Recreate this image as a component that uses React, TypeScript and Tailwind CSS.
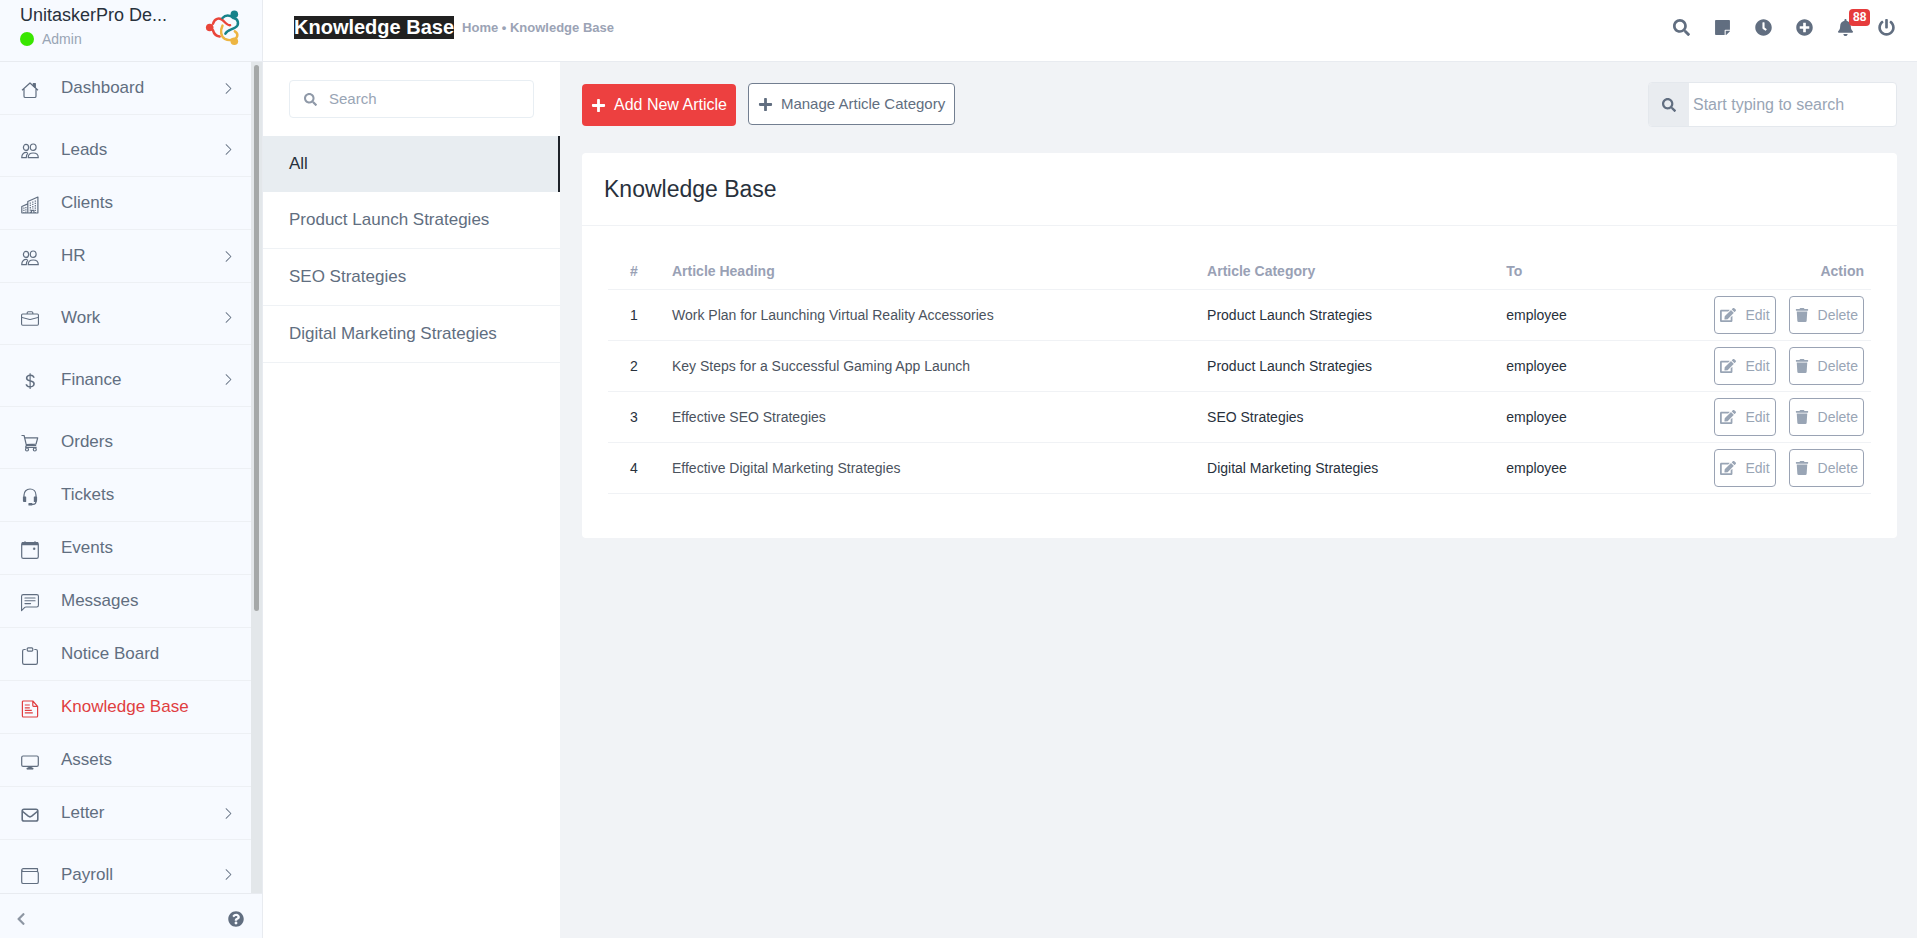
import React, { useState } from "react";
import {
  FaBell,
  FaChevronLeft,
  FaClock,
  FaEdit,
  FaPlus,
  FaPlusCircle,
  FaPowerOff,
  FaQuestionCircle,
  FaSearch,
  FaStickyNote,
  FaTrash,
} from "react-icons/fa";
import { BsBriefcase, BsChatLeftText, BsChevronRight, BsCurrencyDollar } from "react-icons/bs";

type IconProps = { className?: string };

const svgProps = {
  viewBox: "0 0 18 18",
  fill: "none",
  stroke: "currentColor",
  strokeWidth: 1.2,
  strokeLinejoin: "round" as const,
};

const HouseIcon = ({ className }: IconProps) => (
  <svg {...svgProps} className={className}>
    <path d="M1 9.300 9 2l8 7.300M3 8v7.200c0 .8.5 1.300 1.300 1.300h9.400c.8 0 1.300-.5 1.300-1.300V8" />
    <path d="M12.300 2.500h2v4l-2-1.800z" fill="currentColor" />
  </svg>
);

const PeopleIcon = ({ className }: IconProps) => (
  <svg {...svgProps} className={className}>
    <ellipse cx="5" cy="5.4" rx="2.6" ry="3" />
    <ellipse cx="12.2" cy="5.2" rx="2.9" ry="3.200" />
    <path d="M6.500 10.600C3 9.900.7 11.800.7 15.700h4.600c0-2 .5-3.600 1.600-4.600M7.200 15.700c0-3.200 1.800-4.700 5-4.700s5.100 1.500 5.100 4.700z" />
  </svg>
);

const BuildingIcon = ({ className }: IconProps) => (
  <svg {...svgProps} className={className}>
    <path d="M.8 17v-6.500l6-2.600M6.800 17V5.500L16.900 1v16M.5 17h16.800M10.500 17v-2.600h2.400V17" />
    <path strokeDasharray="1.3 1" d="M9.300 6.500V17M11.800 5.500V13M14.300 4.500V17M2.900 11.500V17M4.900 11V17" />
  </svg>
);

const CartIcon = ({ className }: IconProps) => (
  <svg {...svgProps} className={className}>
    <path d="M.5 1.500h2.600l2.300 9.800h9.800M3.700 3.800h13l-1.600 6.200-10 .6M5.400 11.300l-.8 2h11" />
    <circle cx="6" cy="15.500" r="1.500" />
    <circle cx="13.800" cy="15.500" r="1.500" />
  </svg>
);

const HeadsetIcon = ({ className }: IconProps) => (
  <svg {...svgProps} className={className}>
    <path d="M3 10.500V7.300C3 3.500 5.500 1 9 1s6 2.500 6 6.300v6.200c0 1.700-1.200 2.800-3 2.800h-1.500" />
    <path d="M3 9h1.600v4.500H3.500c-.7 0-1-.4-1-1V9zM15 9h-1.600v4.500h1.100c.7 0 1-.4 1-1V9zM8 15.600h2.800V17H8z" fill="currentColor" />
  </svg>
);

const CalendarIcon = ({ className }: IconProps) => (
  <svg {...svgProps} className={className}>
    <rect x=".7" y="1.700" width="16.600" height="15.600" rx="1.600" />
    <path d="M1.500 1.500h15v2.200h-15zM4 .3v1.500M14 .3v1.500" fill="currentColor" />
    <path d="M12.400 6.900h1.600v1.600h-1.600z" fill="currentColor" strokeWidth=".6" />
  </svg>
);

const ClipboardIcon = ({ className }: IconProps) => (
  <svg {...svgProps} className={className}>
    <path d="M4.700 2.500H3.200c-1 0-1.600.6-1.600 1.600v11.600c0 1 .6 1.600 1.600 1.600h11.600c1 0 1.600-.6 1.600-1.600V4.100c0-1-.6-1.600-1.600-1.600h-1.500" />
    <rect x="6.200" y=".9" width="5.600" height="3.200" rx="1" />
  </svg>
);

const ArticleIcon = ({ className }: IconProps) => (
  <svg {...svgProps} className={className}>
    <path d="M11.800 1H2.300c-.6 0-.9.3-.9.900v14.200c0 .6.300.9.900.9h13.400c.6 0 .9-.3.900-.9V6.300zM11.800 1v4.600c0 .5.200.7.700.7h4.100" />
    <path d="M3.800 5h5M3.800 7.800h5M3.800 10.300h7M3.800 12.800h8" />
  </svg>
);

const MonitorIcon = ({ className }: IconProps) => (
  <svg {...svgProps} className={className}>
    <rect x=".7" y="3" width="16.600" height="10.400" rx="1.400" />
    <path d="M7.300 13.600h3.400v1.400h1.400v1.200H5.900V15h1.400z" fill="currentColor" strokeWidth=".6" />
  </svg>
);

const EnvelopeIcon = ({ className }: IconProps) => (
  <svg {...svgProps} strokeWidth={1.600} className={className}>
    <rect x="1.200" y="3.200" width="15.600" height="11.800" rx="1.800" />
    <path d="m1.700 5.500 5.600 4.700c1.200.9 2.200.9 3.400 0L16.300 5.500" />
  </svg>
);

const WalletIcon = ({ className }: IconProps) => (
  <svg {...svgProps} className={className}>
    <path d="M16.500 4.500V1.700H2.400C1.300 1.700.7 2.300.7 3.100s.6 1.400 1.700 1.400h13.300c1 0 1.600.6 1.600 1.600v8.800c0 1-.6 1.600-1.600 1.600H2.300c-1 0-1.600-.6-1.600-1.600V3.100" />
  </svg>
);

const Logo = () => (
  <svg viewBox="0 0 36 38" className="h-9 w-[35px]" fill="none" strokeWidth="2.600" strokeLinecap="round">
    <circle cx="4.500" cy="18.500" r="4" fill="#e9453a" />
    <circle cx="30.500" cy="4.500" r="4" fill="#16828a" />
    <circle cx="30.500" cy="33" r="4" fill="#edb542" />
    <path stroke="#e9453a" d="M8 14.500C9.500 9 14.500 7.500 18.500 11c3 3 5 5.500 7.500 5M8 21.500c1 4 3.500 6 7 6.500" />
    <path stroke="#edb542" d="M18 16.500c-2.500 5-2 11.500 2.500 14 2.500 1.300 6 1.500 8 .5C34 31 35.500 25 31 22.500" />
    <path stroke="#16828a" d="M18 8.500c3-3.500 8-3.500 11.500 0C35 9 36 16 31.500 18.500c-4 2.500-8.500 2-10.500 6.500" />
  </svg>
);

const menu = [
  { label: "Dashboard", icon: HouseIcon, sub: true },
  { label: "Leads", icon: PeopleIcon, sub: true, spaced: true },
  { label: "Clients", icon: BuildingIcon },
  { label: "HR", icon: PeopleIcon, sub: true },
  { label: "Work", icon: BsBriefcase, sub: true, spaced: true },
  { label: "Finance", icon: BsCurrencyDollar, sub: true, spaced: true },
  { label: "Orders", icon: CartIcon, spaced: true },
  { label: "Tickets", icon: HeadsetIcon },
  { label: "Events", icon: CalendarIcon },
  { label: "Messages", icon: BsChatLeftText },
  { label: "Notice Board", icon: ClipboardIcon },
  { label: "Knowledge Base", icon: ArticleIcon, active: true },
  { label: "Assets", icon: MonitorIcon },
  { label: "Letter", icon: EnvelopeIcon, sub: true },
  { label: "Payroll", icon: WalletIcon, sub: true, spaced: true },
];

const categories = ["All", "Product Launch Strategies", "SEO Strategies", "Digital Marketing Strategies"];

const articles = [
  { heading: "Work Plan for Launching Virtual Reality Accessories", category: "Product Launch Strategies", to: "employee" },
  { heading: "Key Steps for a Successful Gaming App Launch", category: "Product Launch Strategies", to: "employee" },
  { heading: "Effective SEO Strategies", category: "SEO Strategies", to: "employee" },
  { heading: "Effective Digital Marketing Strategies", category: "Digital Marketing Strategies", to: "employee" },
];

const Sidebar = () => (
  <aside className="flex w-[263px] shrink-0 flex-col border-r border-[#e8ebf0] bg-[#f7faff]">
    <div className="flex h-[62px] shrink-0 justify-between border-b border-[#e8ebf0] pl-5 pr-[22px]">
      <div className="pt-[5px]">
        <p className="text-[18px] leading-5 text-[#28313c]">UnitaskerPro De...</p>
        <p className="flex items-center gap-2 pt-1 text-sm text-[#99a5b5]">
          <span className="size-[14px] rounded-full bg-[#39e600]" />
          Admin
        </p>
      </div>
      <div className="pt-[10px]">
        <Logo />
      </div>
    </div>

    <div className="flex min-h-0 flex-1">
      <nav className="min-w-0 flex-1 overflow-hidden">
        {menu.map(({ label, icon: Icon, sub, spaced, active }) => (
          <a
            key={label}
            href="#"
            className={`flex items-center border-b border-[#edf0f4] pl-[21px] pr-4 ${
              spaced ? "h-[62px] pt-2" : "h-[53px]"
            } ${active ? "text-[#e03e41]" : "text-[#616e80]"}`}
          >
            <Icon className="mt-[3px] size-[18px]" />
            <span className="flex-1 pl-[22px] text-[17px]">{label}</span>
            {sub && <BsChevronRight className="size-[13px]" />}
          </a>
        ))}
      </nav>
      {/* scroll track */}
      <div className="w-[11px] bg-[#e3e7ea] px-[3px] pt-[3px]">
        <div className="h-[66%] rounded-full bg-[#a5a8a8]" />
      </div>
    </div>

    <div className="flex h-[45px] shrink-0 items-center justify-between border-t border-[#e8ebf0] pl-[14px] pr-[18px] pt-[6px] text-[#616e80]">
      <button type="button" aria-label="Collapse menu" className="text-[#8d96a3]">
        <FaChevronLeft className="size-[14px]" />
      </button>
      <button type="button" aria-label="Help">
        <FaQuestionCircle className="size-4" />
      </button>
    </div>
  </aside>
);

const TopBar = () => (
  <header className="flex h-[62px] shrink-0 items-center justify-between border-b border-[#e8ebf0] bg-white pb-[6px] pl-[31px] pr-[22px]">
    <div className="flex items-center gap-2">
      <h1 className="bg-[#212121] text-xl leading-[23px] font-bold text-white">Knowledge Base</h1>
      <p className="text-[13px] font-bold text-[#9ba3b5]">
        <a href="#">Home</a> • <a href="#">Knowledge Base</a>
      </p>
    </div>
    <div className="flex items-center gap-6 text-[#616e80]">
      <button type="button" aria-label="Search"><FaSearch className="size-[17px]" /></button>
      <button type="button" aria-label="Sticky notes"><FaStickyNote className="size-[17px]" /></button>
      <button type="button" aria-label="Timer"><FaClock className="size-[17px]" /></button>
      <button type="button" aria-label="Add"><FaPlusCircle className="size-[17px]" /></button>
      <button type="button" aria-label="Notifications" className="relative">
        <FaBell className="size-[17px]" />
        <span className="absolute -top-[10px] left-3 rounded bg-[#e63c3c] px-1 text-xs leading-[17px] font-bold text-white">88</span>
      </button>
      <button type="button" aria-label="Log out"><FaPowerOff className="size-[17px]" /></button>
    </div>
  </header>
);

const App = () => {
  const [selected, setSelected] = useState("All");

  return (
    <div className="flex h-screen overflow-hidden bg-[#f1f3f6] font-['Liberation_Sans',Arial,sans-serif] text-[#28313c]">
      <Sidebar />

      <div className="flex min-w-0 flex-1 flex-col">
        <TopBar />

        <div className="flex min-h-0 flex-1">
          <section className="w-[297px] shrink-0 bg-white">
            <div className="px-[26px] pt-[18px] pb-[18px]">
              <label className="flex h-[38px] items-center gap-3 rounded border border-[#e8eef3] px-[14px] text-[#8f99a8]">
                <FaSearch className="size-[13px] shrink-0" />
                <input
                  type="text"
                  aria-label="Search categories"
                  placeholder="Search"
                  className="w-full min-w-0 text-[15px] outline-none placeholder:text-[#99a5b5]"
                />
              </label>
            </div>
            {categories.map((c) => (
              <button
                key={c}
                type="button"
                onClick={() => setSelected(c)}
                className={`flex w-full items-center pl-[26px] text-left text-[17px] ${
                  selected === c
                    ? "h-14 border-r-2 border-[#1d2228] bg-[#e8edf1] text-[#28313c]"
                    : "h-[57px] border-b border-[#eff2f5] text-[#616e80]"
                }`}
              >
                {c}
              </button>
            ))}
          </section>

          <main className="min-w-0 flex-1 pt-5 pr-5 pl-[22px]">
            <div className="flex items-start justify-between">
              <div className="flex items-center gap-3">
                <button type="button" className="mt-[2px] flex h-[42px] items-center gap-2 rounded bg-[#ed4040] px-[9px] text-base text-white">
                  <FaPlus className="size-[15px]" />
                  Add New Article
                </button>
                <button type="button" className="flex h-[42px] items-center gap-2 rounded border border-[#727e90] bg-white px-[9px] text-[15px] text-[#616e80]">
                  <FaPlus className="size-[15px]" />
                  Manage Article Category
                </button>
              </div>
              <label className="flex h-[45px] w-[249px] items-center overflow-hidden rounded border border-[#e4e8ed] bg-white">
                <span className="flex h-full w-10 shrink-0 items-center justify-center bg-[#e9ecf0] text-[#616e80]">
                  <FaSearch className="size-[14px]" />
                </span>
                <input
                  type="text"
                  aria-label="Search articles"
                  placeholder="Start typing to search"
                  className="w-full min-w-0 px-1 text-base outline-none placeholder:text-[#99a5b5]"
                />
              </label>
            </div>

            <div className="mt-[26px] rounded bg-white pb-11">
              <h2 className="flex h-[73px] items-center border-b border-[#f0f2f5] px-[22px] text-[23px]">Knowledge Base</h2>
              <div className="px-[26px] pt-[27px]">
                <table className="w-full table-fixed text-left text-sm">
                  <thead>
                    <tr className="h-9 border-b border-[#f0f2f5] text-[#99a1b5]">
                      <th className="w-[52px] text-center">#</th>
                      <th className="w-[43%] pl-3">Article Heading</th>
                      <th className="w-[24%] pl-1">Article Category</th>
                      <th className="w-[12%]">To</th>
                      <th className="pr-[7px] text-right">Action</th>
                    </tr>
                  </thead>
                  <tbody>
                    {articles.map((a, i) => (
                      <tr key={a.heading} className="h-[51px] border-b border-[#f0f2f5]">
                        <td className="text-center">{i + 1}</td>
                        <td className="pl-3 text-[#4b535e]">{a.heading}</td>
                        <td className="pl-1">{a.category}</td>
                        <td>{a.to}</td>
                        <td className="pr-[7px]">
                          <div className="flex justify-end gap-[13px] text-[#99a5b5]">
                            <button type="button" className="flex h-[38px] items-center gap-[9px] rounded border border-[#9aa3b4] px-[5px]">
                              <FaEdit className="size-4" />
                              Edit
                            </button>
                            <button type="button" className="flex h-[38px] items-center gap-[9px] rounded border border-[#9aa3b4] px-[5px]">
                              <FaTrash className="size-[14px]" />
                              Delete
                            </button>
                          </div>
                        </td>
                      </tr>
                    ))}
                  </tbody>
                </table>
              </div>
            </div>
          </main>
        </div>
      </div>
    </div>
  );
};

export default App;
